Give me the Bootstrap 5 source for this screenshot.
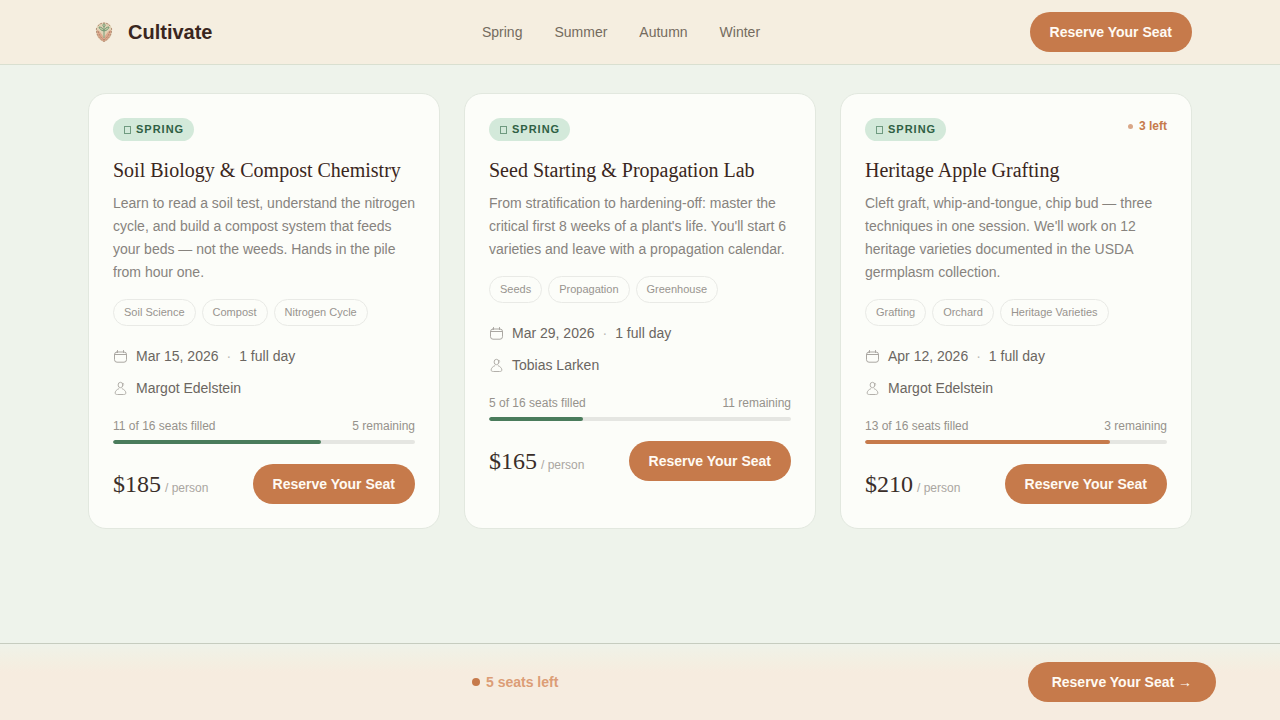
<!DOCTYPE html>
<html lang="en">
<head>
<meta charset="utf-8">
<meta name="viewport" content="width=device-width, initial-scale=1">
<title>Cultivate</title>
<link href="https://cdn.jsdelivr.net/npm/bootstrap@5.3.0/dist/css/bootstrap.min.css" rel="stylesheet">
<style>
:root { --clay: #c67a4b; --forest: #4a7c5c; --bark: #3a2620; }
body { font-family: "Liberation Sans", Arial, sans-serif; font-size: 14px; line-height: 20px; background: #eef3eb; color: #6b6661; padding-bottom: 77px; }
.wrap { max-width: 1152px; }
.site-nav { background: #f5eee0; border-bottom: 1px solid #d9dfd0; padding: 12px 0; }
.brand-name { font-size: 20px; line-height: 24px; color: var(--bark); }
.site-links { gap: 32px; }
.site-links a { color: #746b5e; }
.btn-clay { --bs-btn-bg: var(--clay); --bs-btn-color: #fffaf3; --bs-btn-hover-bg: #b56b3e; --bs-btn-hover-color: #fffaf3; --bs-btn-active-bg: #a96238; --bs-btn-active-color: #fffaf3; --bs-btn-font-size: 14px; --bs-btn-line-height: 20px; --bs-btn-padding-y: 10px; --bs-btn-padding-x: 20px; --bs-btn-border-width: 0; --bs-btn-font-weight: 700; white-space: nowrap; }
.btn-clay.btn-wide { --bs-btn-padding-x: 24px; }
.workshops { padding-top: 28px; padding-bottom: 28px; }
.workshop { background: #fcfdf9; border: 1px solid #e2e8df; border-radius: 18px; padding: 24px; }
.season { background: #d3e9da; color: #2f6044; font-size: 11px; line-height: 15px; letter-spacing: 1px; padding: 4px 10px; }
.season-mark { width: 7px; height: 8px; border: 1px solid #6f9a80; margin: 0 5px 0 1px; }
.scarce { color: var(--clay); font-size: 12px; line-height: 16px; }
.scarce, .seats-left { gap: 6px; }
.dot { width: 5px; height: 5px; background: var(--clay); opacity: .65; }
.dot-lg { width: 8px; height: 8px; background: var(--clay); }
.workshop h2 { font-family: "Liberation Serif", "Times New Roman", serif; font-size: 20px; line-height: 26px; font-weight: 400; color: var(--bark); margin: 16px 0 9px; }
.blurb { line-height: 23px; color: #87837e; margin-bottom: 15px; }
.topics { gap: 6px; margin-bottom: 20px; }
.topics li { font-size: 11px; line-height: 17px; color: #98948f; border: 1px solid #e9eae6; padding: 4px 10px; }
.facts { gap: 12px; margin-bottom: 20px; }
.facts svg { color: #aaa7a2; }
.sep { color: #b9b9b5; }
.seats { font-size: 12px; line-height: 16px; color: #96928c; margin-bottom: 6px; }
.workshop .progress { --bs-progress-height: 4px; --bs-progress-bg: #e5e6e2; --bs-progress-bar-bg: var(--forest); --bs-progress-border-radius: 4px; margin-bottom: 20px; }
.workshop .progress-bar { border-radius: 4px; }
.workshop .bar-clay { background: var(--clay); }
.price { font-family: "Liberation Serif", "Times New Roman", serif; font-size: 24px; line-height: 28px; color: #3a2e29; }
.per { font-size: 12px; color: #aaa6a1; }
.reserve-bar { background: linear-gradient(#eff2e9, #f3efe2 16px, #f6ecdf 28px, #f6ece0); border-top: 1px solid #c6ccbf; padding: 18px 0; }
.reserve-grid { display: grid; grid-template-columns: 17fr 31fr; align-items: center; }
.seats-left { color: #dc9d76; }
</style>
</head>
<body>
<svg class="d-none" aria-hidden="true">
  <symbol id="cal" viewBox="0 0 15 15" fill="none" stroke="currentColor" stroke-linecap="round"><rect x="1.500" y="3" width="12" height="10.200" rx="2.500"/><path d="M1.500 5.500h12M4.500 1.500v2M10.500 1.500v2"/></symbol>
  <symbol id="who" viewBox="0 0 15 15" fill="none" stroke="currentColor" stroke-width=".9" stroke-linecap="round" stroke-linejoin="round"><ellipse cx="7.500" cy="4" rx="2.400" ry="2.700"/><path d="M9.800 2.200l.7.7M5.800 7.700C3.500 8.600 2.200 10.300 2.100 12c0 1.100 1 1.500 2.400 1.500h6c1.400 0 2.400-.4 2.400-1.500-.1-1.700-1.400-3.400-3.700-4.300"/></symbol>
</svg>

<header class="site-nav sticky-top">
  <div class="container-fluid wrap px-4 d-flex align-items-center justify-content-between">
    <a href="#" class="d-flex align-items-center gap-2 text-decoration-none">
      <svg width="32" height="32" viewBox="0 0 32 32" fill="none" aria-hidden="true">
        <path d="M16 6.500c5 0 8 3.500 8 8.500 0 5.500-3.500 9.500-8 11-4.500-1.500-8-5.500-8-11 0-5 3-8.500 8-8.500z" fill="#e0d2b5"/>
        <path d="M9 14c2 0 5 4 7 8 2-4 5-8 7-8 .5 5.500-3 10-7 11.500C12 24 8.500 19.500 9 14z" fill="#dda98d"/>
        <path d="M16 22V11M16 15c-3-.5-4.500-2-5-4 2.500 0 4.500 1.500 5 4zM16 15c3-.5 4.500-2 5-4-2.500 0-4.500 1.500-5 4zM16 11c-1.500-1-1.500-2.500 0-3.500 1.500 1 1.500 2.500 0 3.500z" stroke="#7a9c78" stroke-width="1" fill="#c2cda7"/>
        <path d="M8.500 12c-.8 6 2.500 11 7.500 13.500M23.500 12c.8 6-2.500 11-7.500 13.500M10 15c1 4 3 7 6 9M22 15c-1 4-3 7-6 9M10 10c2-4 10-4 12 0" stroke="#a97f68" stroke-width=".8" stroke-dasharray="2 1"/>
      </svg>
      <span class="brand-name fw-bold">Cultivate</span>
    </a>
    <nav class="site-links d-none d-md-flex" aria-label="Seasons">
      <a class="text-decoration-none" href="#spring">Spring</a>
      <a class="text-decoration-none" href="#summer">Summer</a>
      <a class="text-decoration-none" href="#autumn">Autumn</a>
      <a class="text-decoration-none" href="#winter">Winter</a>
    </nav>
    <button type="button" class="btn btn-clay rounded-pill">Reserve Your Seat</button>
  </div>
</header>

<main class="container-fluid wrap px-4 workshops" id="spring">
  <div class="row row-cols-1 row-cols-md-2 row-cols-lg-3 g-4">
    <div class="col">
      <article class="workshop h-100">
        <div class="d-flex justify-content-between align-items-start">
          <span class="season rounded-pill fw-bold d-flex align-items-center"><span class="season-mark"></span>SPRING</span>
        </div>
        <h2>Soil Biology &amp; Compost Chemistry</h2>
        <p class="blurb">Learn to read a soil test, understand the nitrogen cycle, and build a compost system that feeds your beds — not the weeds. Hands in the pile from hour one.</p>
        <ul class="topics list-unstyled d-flex flex-wrap">
          <li class="rounded-pill">Soil Science</li><li class="rounded-pill">Compost</li><li class="rounded-pill">Nitrogen Cycle</li>
        </ul>
        <div class="facts d-flex flex-column">
          <div class="d-flex align-items-center gap-2"><svg width="15" height="15" aria-hidden="true"><use href="#cal"/></svg><span>Mar 15, 2026</span><span class="sep">·</span><span>1 full day</span></div>
          <div class="d-flex align-items-center gap-2"><svg width="15" height="15" aria-hidden="true"><use href="#who"/></svg><span>Margot Edelstein</span></div>
        </div>
        <div class="seats d-flex justify-content-between"><span>11 of 16 seats filled</span><span>5 remaining</span></div>
        <div class="progress" role="progressbar" aria-label="Seats filled" aria-valuenow="11" aria-valuemin="0" aria-valuemax="16"><div class="progress-bar" style="width:68.75%"></div></div>
        <div class="d-flex align-items-center justify-content-between">
          <div class="d-flex align-items-baseline gap-1"><span class="price">$185</span><span class="per">/ person</span></div>
          <button type="button" class="btn btn-clay rounded-pill">Reserve Your Seat</button>
        </div>
      </article>
    </div>
    <div class="col">
      <article class="workshop h-100">
        <div class="d-flex justify-content-between align-items-start">
          <span class="season rounded-pill fw-bold d-flex align-items-center"><span class="season-mark"></span>SPRING</span>
        </div>
        <h2>Seed Starting &amp; Propagation Lab</h2>
        <p class="blurb">From stratification to hardening-off: master the critical first 8 weeks of a plant's life. You'll start 6 varieties and leave with a propagation calendar.</p>
        <ul class="topics list-unstyled d-flex flex-wrap">
          <li class="rounded-pill">Seeds</li><li class="rounded-pill">Propagation</li><li class="rounded-pill">Greenhouse</li>
        </ul>
        <div class="facts d-flex flex-column">
          <div class="d-flex align-items-center gap-2"><svg width="15" height="15" aria-hidden="true"><use href="#cal"/></svg><span>Mar 29, 2026</span><span class="sep">·</span><span>1 full day</span></div>
          <div class="d-flex align-items-center gap-2"><svg width="15" height="15" aria-hidden="true"><use href="#who"/></svg><span>Tobias Larken</span></div>
        </div>
        <div class="seats d-flex justify-content-between"><span>5 of 16 seats filled</span><span>11 remaining</span></div>
        <div class="progress" role="progressbar" aria-label="Seats filled" aria-valuenow="5" aria-valuemin="0" aria-valuemax="16"><div class="progress-bar" style="width:31.25%"></div></div>
        <div class="d-flex align-items-center justify-content-between">
          <div class="d-flex align-items-baseline gap-1"><span class="price">$165</span><span class="per">/ person</span></div>
          <button type="button" class="btn btn-clay rounded-pill">Reserve Your Seat</button>
        </div>
      </article>
    </div>
    <div class="col">
      <article class="workshop h-100">
        <div class="d-flex justify-content-between align-items-start">
          <span class="season rounded-pill fw-bold d-flex align-items-center"><span class="season-mark"></span>SPRING</span>
          <span class="scarce fw-bold d-flex align-items-center"><span class="dot rounded-circle"></span>3 left</span>
        </div>
        <h2>Heritage Apple Grafting</h2>
        <p class="blurb">Cleft graft, whip-and-tongue, chip bud — three techniques in one session. We'll work on 12 heritage varieties documented in the USDA germplasm collection.</p>
        <ul class="topics list-unstyled d-flex flex-wrap">
          <li class="rounded-pill">Grafting</li><li class="rounded-pill">Orchard</li><li class="rounded-pill">Heritage Varieties</li>
        </ul>
        <div class="facts d-flex flex-column">
          <div class="d-flex align-items-center gap-2"><svg width="15" height="15" aria-hidden="true"><use href="#cal"/></svg><span>Apr 12, 2026</span><span class="sep">·</span><span>1 full day</span></div>
          <div class="d-flex align-items-center gap-2"><svg width="15" height="15" aria-hidden="true"><use href="#who"/></svg><span>Margot Edelstein</span></div>
        </div>
        <div class="seats d-flex justify-content-between"><span>13 of 16 seats filled</span><span>3 remaining</span></div>
        <div class="progress" role="progressbar" aria-label="Seats filled" aria-valuenow="13" aria-valuemin="0" aria-valuemax="16"><div class="progress-bar bar-clay" style="width:81.25%"></div></div>
        <div class="d-flex align-items-center justify-content-between">
          <div class="d-flex align-items-baseline gap-1"><span class="price">$210</span><span class="per">/ person</span></div>
          <button type="button" class="btn btn-clay rounded-pill">Reserve Your Seat</button>
        </div>
      </article>
    </div>
  </div>
</main>

<aside class="reserve-bar fixed-bottom" aria-label="Reserve">
  <div class="container-fluid wrap px-0 reserve-grid">
    <span></span>
    <div class="d-flex align-items-center justify-content-between">
      <span class="seats-left fw-bold d-flex align-items-center"><span class="dot-lg rounded-circle"></span>5 seats left</span>
      <button type="button" class="btn btn-clay btn-wide rounded-pill">Reserve Your Seat →</button>
    </div>
  </div>
</aside>
<script src="https://cdn.jsdelivr.net/npm/bootstrap@5.3.0/dist/js/bootstrap.bundle.min.js"></script>
</body>
</html>
